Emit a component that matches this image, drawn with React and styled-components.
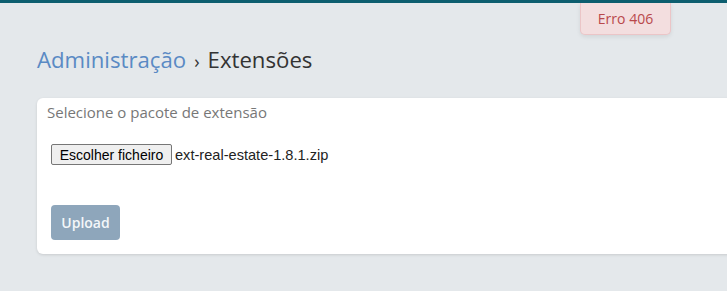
import React from "react";
import styled, { createGlobalStyle } from "styled-components";

const Global = createGlobalStyle`
  html, body { margin: 0; padding: 0; }
  body {
    background: #e4e8eb;
    font-family: "Open Sans", "Liberation Sans", sans-serif;
    overflow: hidden;
  }
`;

const Page = styled.div`
  position: relative;
  min-height: 291px;
  box-sizing: border-box;
  border-top: 3px solid #0c5e6f;
  padding: 0 0 0 37px;
  overflow: hidden;
`;

const Toast = styled.div`
  position: absolute;
  top: 0;
  left: 580px;
  width: 91px;
  height: 32px;
  box-sizing: border-box;
  background: #f3dedf;
  border: 1px solid #ebc5c7;
  border-top: none;
  border-radius: 0 0 5px 5px;
  box-shadow: 0 2px 4px rgba(0, 0, 0, 0.08);
  color: #b9484b;
  font-size: 14px;
  display: flex;
  align-items: center;
  justify-content: center;
`;

const Heading = styled.h1`
  margin: 0;
  padding-top: 42px;
  height: 53px;
  font-size: 22.2px;
  font-weight: 400;
  line-height: 30px;
  color: #333;
  display: flex;
  align-items: baseline;
`;

const Crumb = styled.a`
  color: #5a8ac4;
  text-decoration: none;
`;

const Sep = styled.span`
  margin: 0 8px 0 8px;
  font-size: 18px;
  color: #333;
`;

const Card = styled.div`
  width: 760px;
  height: 156px;
  box-sizing: border-box;
  background: #fff;
  border-radius: 6px;
  box-shadow: 0 1px 3px rgba(0, 0, 0, 0.12);
  padding: 4px 10px 14px 10px;
  display: flex;
  flex-direction: column;
`;

const Label = styled.div`
  font-size: 15px;
  line-height: 21px;
  color: #777;
`;

const FileRow = styled.div`
  margin-top: 21px;
  padding-left: 4px;
  display: flex;
  align-items: center;
  font-family: "Liberation Sans", Arial, sans-serif;
  font-size: 14.6px;
  color: #222;
`;

const FileButton = styled.button`
  height: 21px;
  width: 121px;
  box-sizing: border-box;
  padding: 0;
  margin: 0 3px 0 0;
  font-family: "Liberation Sans", Arial, sans-serif;
  font-size: 14px;
  color: #000;
  background: #efefef;
  border: 1px solid #767676;
  border-radius: 2px;
`;

const UploadButton = styled.button`
  margin-top: 40px;
  margin-left: 4px;
  width: 69px;
  height: 35px;
  border: none;
  border-radius: 4px;
  background: #8ea6bb;
  color: #f4f7f9;
  font-family: "Open Sans", "Liberation Sans", sans-serif;
  font-size: 14px;
  font-weight: 600;
  padding: 0;
`;

export default function App() {
  return (
    <>
      <Global />
      <Page>
        <Toast>Erro 406</Toast>
        <Heading>
          <Crumb href="#">Administração</Crumb>
          <Sep>›</Sep>
          <span>Extensões</span>
        </Heading>
        <Card>
          <Label>Selecione o pacote de extensão</Label>
          <FileRow>
            <FileButton type="button">Escolher ficheiro</FileButton>
            <span>ext-real-estate-1.8.1.zip</span>
          </FileRow>
          <div>
            <UploadButton type="button" disabled>Upload</UploadButton>
          </div>
        </Card>
      </Page>
    </>
  );
}
